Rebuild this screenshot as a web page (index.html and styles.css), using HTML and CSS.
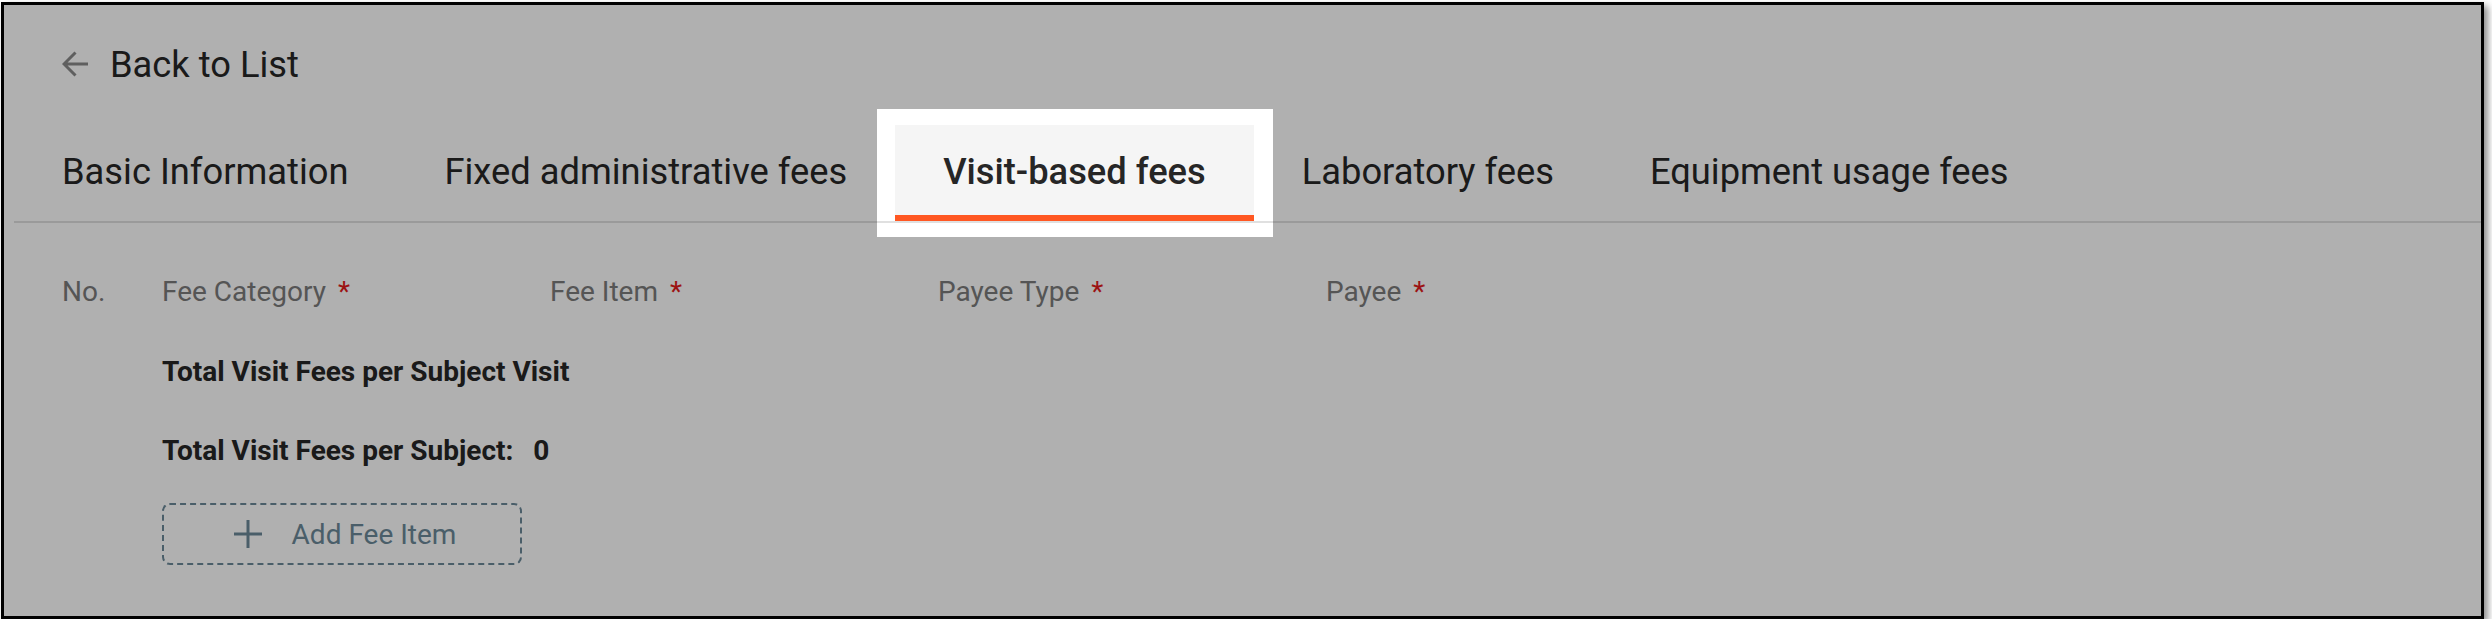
FILE: index.html
```html
<!DOCTYPE html>
<html lang="en">
<head>
    <meta charset="UTF-8">
    <meta name="viewport" content="width=device-width, initial-scale=1.0">
    <title>Visit-based fees</title>
    <link rel="stylesheet" href="styles.css">
</head>
<body>
    <div class="frame">
        <div class="page">
            <a class="back-link" href="#">
                <svg class="back-icon" width="26" height="26" viewBox="0 0 26 26">
                    <path d="M26 13H2 M13.5 1.5L2 13l11.5 11.5" fill="none" stroke="currentColor" stroke-width="3"/>
                </svg>
                <span>Back to List</span>
            </a>

            <div class="tabs">
                <div class="tab">Basic Information</div>
                <div class="tab">Fixed administrative fees</div>
                <div class="tab tab-active">Visit-based fees<span class="spotlight"></span></div>
                <div class="tab">Laboratory fees</div>
                <div class="tab">Equipment usage fees</div>
            </div>

            <div class="fee-panel">
                <div class="fee-head">
                    <div>No.</div>
                    <div>Fee Category<span class="req">*</span></div>
                    <div>Fee Item<span class="req">*</span></div>
                    <div>Payee Type<span class="req">*</span></div>
                    <div>Payee<span class="req">*</span></div>
                </div>
                <div class="total-row first">Total Visit Fees per Subject Visit</div>
                <div class="total-row">Total Visit Fees per Subject:<span class="total-value">0</span></div>
                <button class="add-btn">
                    <svg width="28" height="28" viewBox="0 0 28 28">
                        <path d="M14 0V28 M0 14H28" fill="none" stroke="currentColor" stroke-width="3"/>
                    </svg>
                    <span>Add Fee Item</span>
                </button>
            </div>
        </div>
    </div>
</body>
</html>
```

FILE: styles.css
```css
body {
    margin: 0;
    background-color: #fff;
    font-family: Roboto, 'Liberation Sans', sans-serif;
    color: #262626;
}

.frame {
    box-sizing: border-box;
    width: 2483px;
    height: 617px;
    margin: 2px 0 0 1px;
    border: 3px solid #000;
    box-shadow: 4px 4px 7px rgba(0, 0, 0, 0.45);
    overflow: hidden;
}

.page {
    height: 100%;
    padding-left: 10px;
    background-color: #fff;
}

.back-link {
    display: flex;
    align-items: center;
    gap: 22px;
    margin-left: 48px;
    padding-top: 37px;
    height: 44px;
    font-size: 36.3px;
    color: #262626;
    text-decoration: none;
}

.back-icon {
    color: #8a8a8a;
}

.tabs {
    display: flex;
    margin-top: 39px;
    border-bottom: 2px solid #e0e0e0;
}

.tab {
    padding: 25px 48px 21px;
    line-height: 44px;
    font-size: 36.3px;
    border-bottom: 6px solid transparent;
    white-space: nowrap;
}

.tab-active {
    position: relative;
    background-color: #f5f5f5;
    border-bottom-color: #ff5722;
    font-weight: 500;
}

/* tour spotlight: everything outside gets the dark mask */
.spotlight {
    position: absolute;
    top: -16px;
    bottom: -22px;
    left: -18px;
    right: -19px;
    box-shadow: 0 0 0 4000px rgba(0, 0, 0, 0.31);
    pointer-events: none;
    z-index: 10;
}

.fee-panel {
    padding-left: 48px;
}

.fee-head {
    display: grid;
    grid-template-columns: 100px repeat(4, 388px);
    margin-top: 49px;
    line-height: 40px;
    font-size: 28px;
    color: #7b7b7b;
}

.req {
    margin-left: 12px;
    color: #e31b1b;
}

.total-row {
    margin: 39px 0 0 100px;
    line-height: 40px;
    font-size: 28px;
    font-weight: 700;
}

.total-row.first {
    margin-top: 40px;
}

.total-value {
    margin-left: 20px;
}

.add-btn {
    display: flex;
    align-items: center;
    justify-content: center;
    gap: 30px;
    box-sizing: border-box;
    width: 360px;
    height: 62px;
    margin: 32px 0 0 100px;
    padding: 0 0 0 6px;
    border: 2px dashed #6c8999;
    border-radius: 8px;
    background: transparent;
    font-family: Roboto, 'Liberation Sans', sans-serif;
    font-size: 28px;
    color: #6c8999;
    cursor: pointer;
}
```
